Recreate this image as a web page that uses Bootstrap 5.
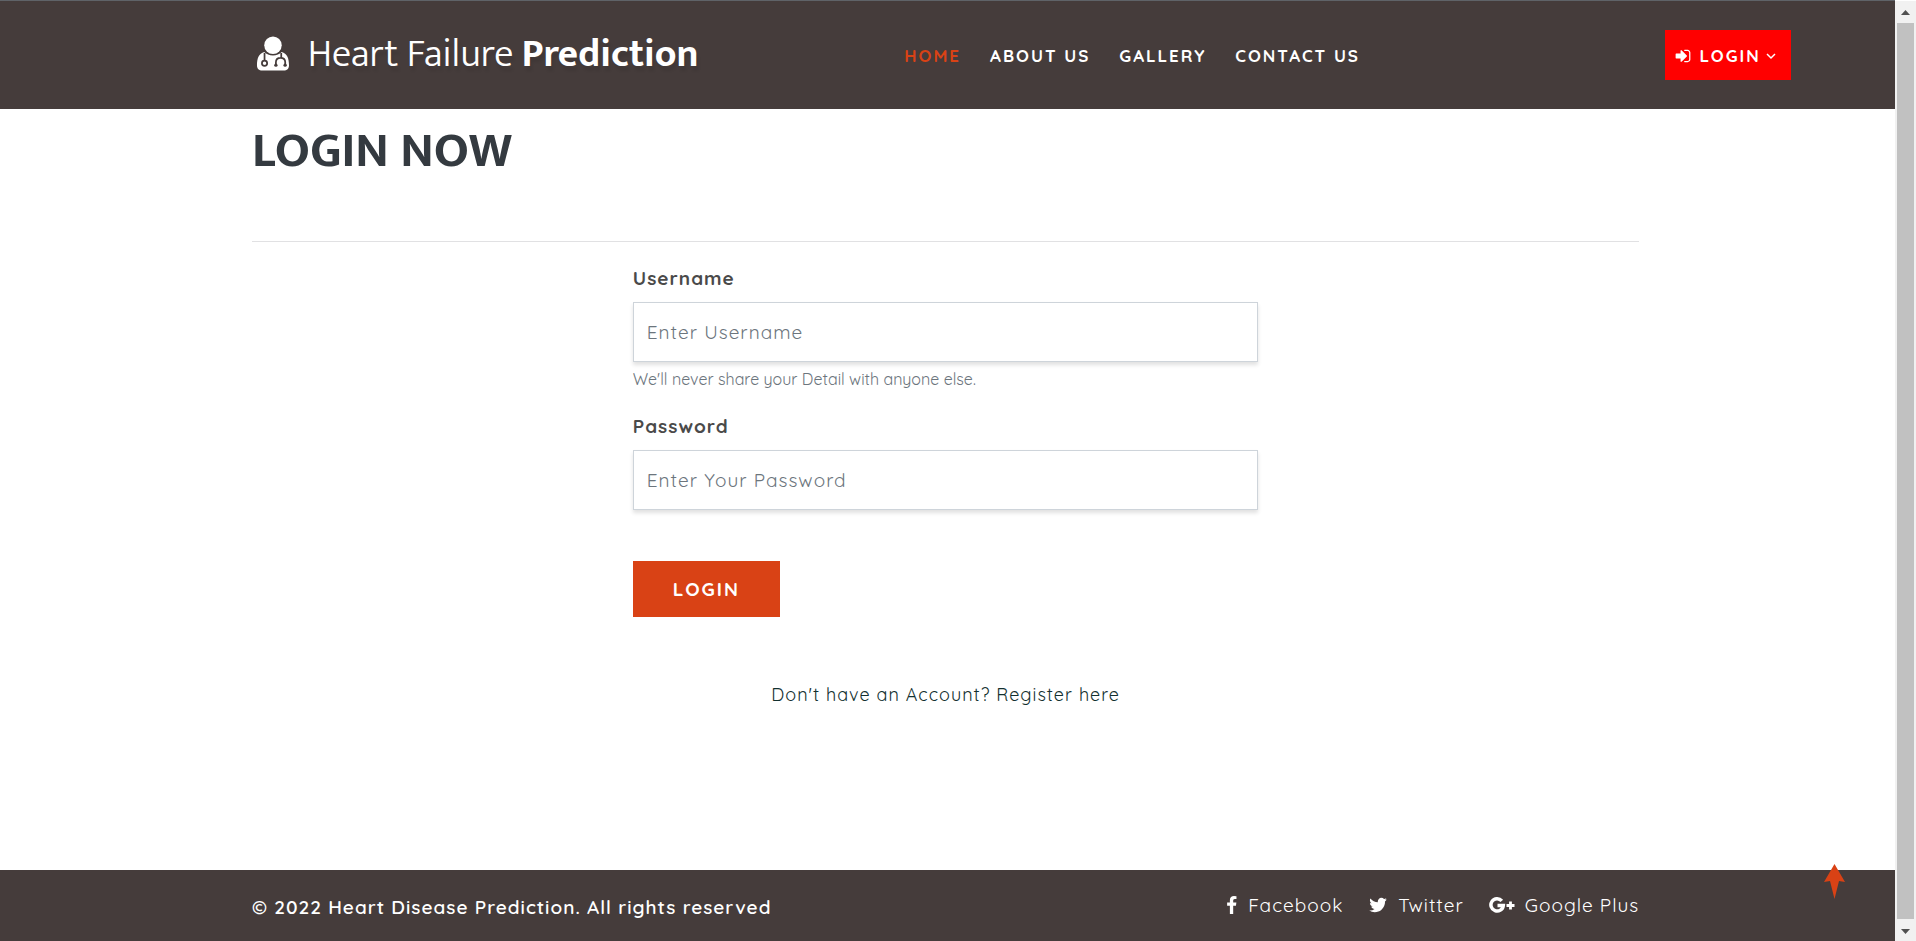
<!DOCTYPE html>
<html lang="en">
<head>
<meta charset="utf-8">
<meta name="viewport" content="width=device-width, initial-scale=1">
<title>Heart Failure Prediction - Login</title>
<link href="https://cdn.jsdelivr.net/npm/bootstrap@5.3.0/dist/css/bootstrap.min.css" rel="stylesheet">
<style>
  :root { --ink: #453c3b; --accent: #d94215; }
  body { font-family: Quicksand, Inter, sans-serif; font-size: 19px; line-height: 28px; letter-spacing: 1px; background: #fff; }
  a { text-decoration: none; }
  .page-shell { width: calc(100% - 21px); }
  .site-header { background: var(--ink); border-top: 1px solid #5f6368; padding: 0 5.5% 0 13.5%; min-height: 109px; }
  .navbar-brand { font-family: Mukta, "Open Sans", sans-serif; font-size: 39px; line-height: 50px; letter-spacing: 0; font-weight: 300; color: #fff; text-shadow: 2px 5px 3px rgba(0,0,0,.08); }
  .navbar-brand:hover { color: #fff; }
  .brand-icon { width: 33px; height: 35px; margin: 0 19px 4px 0; }
  .main-menu { gap: 29px; margin-left: 13.4%; padding-top: 2px; }
  .main-menu .nav-link { padding: 0; font-size: 17px; font-weight: 700; letter-spacing: 2px; color: #fff; }
  .main-menu .nav-link.active { color: var(--accent); }
  .btn-account { background: red; color: #fff; border: 0; border-radius: 0; height: 50px; padding: 2px 10px 0; font-size: 17px; font-weight: 700; letter-spacing: 2px; }
  .btn-account:hover { background: #d00; color: #fff; }
  .inset { padding-left: 13.3%; padding-right: 13.5%; }
  .page-title { font-family: Mukta, "Open Sans", sans-serif; font-size: 50px; line-height: 56px; letter-spacing: 0; font-weight: 700; color: #343a40; margin: 14px 0 62px; }
  .rule { margin: 0; border-top: 1px solid #e1e1e3; opacity: 1; }
  .login-form { width: 45.1%; min-width: 300px; margin: 22px auto 0; }
  .form-label { display: block; font-weight: 700; color: #4a4a4a; margin: 0 0 10px; }
  .form-control { height: 60px; padding: 0 13px; border-color: #ced4da; border-radius: 0; font-size: 19px; font-weight: 400; letter-spacing: 1px; box-shadow: 0 3px 4px rgba(0,0,0,.12); }
  .form-control::placeholder { color: #6c757d; }
  .form-text { font-size: 16px; line-height: 24px; letter-spacing: 0; font-weight: 400; color: #6c757d; margin: 5px 0 21px; }
  .btn-submit { width: 147px; height: 56px; margin-top: 51px; background: var(--accent); color: #fff; border: 0; border-radius: 0; font-size: 19px; font-weight: 700; letter-spacing: 2px; }
  .btn-submit:hover { background: #bd3912; color: #fff; }
  .register { margin: 64px 0; font-size: 18px; }
  .register a { color: #12302f; }
  .site-footer { background: var(--ink); color: #fff; min-height: 71px; padding-bottom: 2px; }
  .site-footer a { color: #fff; }
  .social { gap: 25px; }
  .social svg { margin-right: 10px; }
  .copyright { font-weight: 600; padding-top: 4px; }
  .to-top { position: fixed; right: 71px; bottom: 42px; line-height: 0; }
  .scroll-track { position: fixed; top: 1px; right: 0; bottom: 0; width: 21px; background: #f1f1f1; }
  .scroll-thumb { width: 17px; background: #c1c1c1; }
</style>
</head>
<body>
<div class="page-shell d-flex flex-column min-vh-100">
  <header class="site-header d-flex align-items-center">
    <a class="navbar-brand d-flex align-items-center m-0 p-0" href="#">
      <svg class="brand-icon" viewBox="0 0 34 36" aria-hidden="true">
        <g fill="#fff"><circle cx="17.500" cy="9.500" r="9"/><path d="M8.500 16.500C3 18 1 23 1 30c0 3.500 2 5.500 5.500 5.500h22c3.500 0 5.500-2 5.500-5.500 0-7-2-12-7.500-13.500-2.300 2.200-5.200 3.500-9 3.500s-6.700-1.300-9-3.500z"/></g>
        <g fill="none" stroke="#453c3b" stroke-width="1.800"><path d="M8.800 17.500V25M26 17.500v5M20.500 30v-3c0-2.800 2-4.600 4.800-4.600s4.800 1.800 4.800 4.600v3"/><circle cx="8.800" cy="28" r="2.700"/></g>
        <g fill="#453c3b"><circle cx="20.500" cy="30" r="1.700"/><circle cx="30" cy="30" r="1.700"/></g>
      </svg>
      <span>Heart Failure <strong class="fw-bold">Prediction</strong></span>
    </a>
    <nav class="main-menu nav flex-nowrap text-nowrap" aria-label="Main">
      <a class="nav-link active" href="#" aria-current="page">HOME</a>
      <a class="nav-link" href="#">ABOUT US</a>
      <a class="nav-link" href="#">GALLERY</a>
      <a class="nav-link" href="#">CONTACT US</a>
    </nav>
    <button type="button" class="btn btn-account d-flex align-items-center ms-auto">
      <svg class="me-2" width="16" height="16" viewBox="64 128 1664 1536" fill="#fff" aria-hidden="true"><path d="M1312 896q0 26-19 45l-544 544q-19 19-45 19t-45-19-19-45v-288h-448q-26 0-45-19t-19-45v-384q0-26 19-45t45-19h448v-288q0-26 19-45t45-19 45 19l544 544q19 19 19 45zm352-352v704q0 119-84.500 203.500t-203.500 84.500h-320q-13 0-22.500-9.500t-9.500-22.500q0-4-1-20t-.5-26.500 3-23.500 10-19.500 20.500-6.500h320q66 0 113-47t47-113v-704q0-66-47-113t-113-47h-312l-11.500-1-11.500-3-8-5.500-7-9-2-13.500q0-4-1-20t-.5-26.500 3-23.500 10-19.500 20.500-6.500h320q119 0 203.500 84.500t84.500 203.500z"/></svg>
      LOGIN
      <svg class="mx-1" width="12" height="8" viewBox="0 0 12 8" fill="none" stroke="#fff" stroke-width="1.500" aria-hidden="true"><path d="M2 2l4 4 4-4"/></svg>
    </button>
  </header>

  <main class="inset flex-grow-1">
    <h1 class="page-title">LOGIN NOW</h1>
    <hr class="rule">
    <form class="login-form">
      <label class="form-label" for="username">Username</label>
      <input class="form-control" type="text" id="username" placeholder="Enter Username" aria-describedby="usernameHelp">
      <div class="form-text" id="usernameHelp">We'll never share your Detail with anyone else.</div>
      <label class="form-label" for="password">Password</label>
      <input class="form-control" type="password" id="password" placeholder="Enter Your Password">
      <button type="submit" class="btn btn-submit">LOGIN</button>
      <p class="register text-center"><a href="#">Don't have an Account? Register here</a></p>
    </form>
  </main>

  <footer class="site-footer inset d-flex align-items-center justify-content-between">
    <p class="copyright m-0">© 2022 Heart Disease Prediction. All rights reserved</p>
    <nav class="social d-flex" aria-label="Social">
      <a class="d-flex align-items-center" href="#"><svg width="12" height="18" viewBox="380 0 1100 1664" fill="#fff" aria-hidden="true"><path d="M1343 12v264h-157q-86 0-116 36t-30 108v189h293l-39 296h-254v759h-306v-759h-255v-296h255v-218q0-186 104-288.500t277-102.500q147 0 228 12z"/></svg>Facebook</a>
      <a class="d-flex align-items-center" href="#"><svg width="20" height="20" viewBox="0 0 1792 1792" fill="#fff" aria-hidden="true"><path d="M1684 408q-67 98-162 167 1 14 1 42 0 130-38 259.500t-115.500 248.500-184.500 210.500-258 146-323 54.500q-271 0-496-145 35 4 78 4 225 0 401-138-105-2-188-64.500t-114-159.500q33 5 61 5 43 0 85-11-112-23-185.500-111.500t-73.500-205.500v-4q68 38 146 41-66-44-105-115t-39-154q0-88 44-163 121 149 294.500 238.500t371.500 99.500q-8-38-8-74 0-134 94.500-228.500t228.500-94.500q140 0 236 102 109-21 205-78-37 115-142 178 93-10 186-50z"/></svg>Twitter</a>
      <a class="d-flex align-items-center" href="#"><svg width="26" height="18" viewBox="0 0 26 18" fill="none" stroke="#fff" stroke-width="3.500" aria-hidden="true"><path d="M12.800 4.800A6.200 6.200 0 1 0 14.300 9.500H8.500"/><path d="M21.500 5.500v8M17.500 9.500h8" stroke-width="2.800"/></svg>Google Plus</a>
    </nav>
  </footer>
</div>

<a class="to-top" href="#" aria-label="Back to top"><svg width="21" height="35" viewBox="0 0 21 35" fill="#d94215" aria-hidden="true"><path d="M10.500 0L21 18l-6-1-4.500 18L6 17l-6 1z"/></svg></a>

<div class="scroll-track d-flex flex-column align-items-center" aria-hidden="true">
  <svg width="9" height="22" viewBox="0 0 9 22" fill="#505050"><path d="M4.500 9L9 14H0z"/></svg>
  <div class="scroll-thumb flex-grow-1"></div>
  <svg width="9" height="22" viewBox="0 0 9 22" fill="#505050"><path d="M4.500 15L9 10H0z"/></svg>
</div>
<script src="https://cdn.jsdelivr.net/npm/bootstrap@5.3.0/dist/js/bootstrap.bundle.min.js"></script>
</body>
</html>
